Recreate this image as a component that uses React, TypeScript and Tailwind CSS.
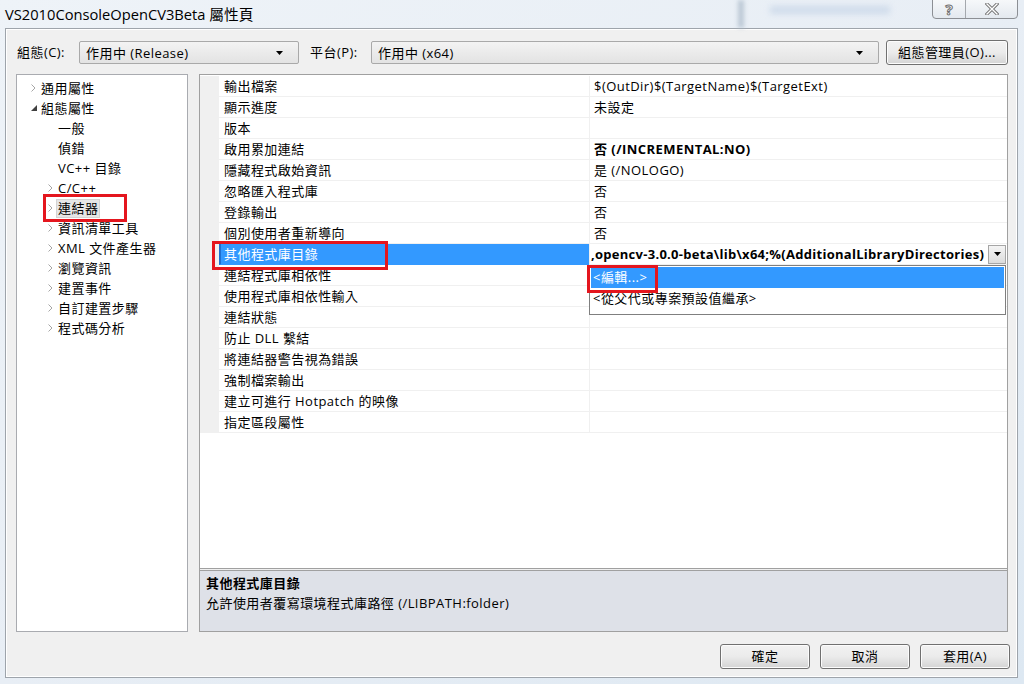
import React from 'react';

const FONT = '"Open Sans", "Noto Sans CJK TC", sans-serif';

interface Prop {
  name: string;
  value: string;
  bold?: boolean;
}

interface TreeItem {
  label: string;
  level: number;
  icon: 'closed' | 'open' | 'none';
  selected?: boolean;
}

const properties: Prop[] = [
  { name: '輸出檔案', value: '$(OutDir)$(TargetName)$(TargetExt)' },
  { name: '顯示進度', value: '未設定' },
  { name: '版本', value: '' },
  { name: '啟用累加連結', value: '否 (/INCREMENTAL:NO)', bold: true },
  { name: '隱藏程式啟始資訊', value: '是 (/NOLOGO)' },
  { name: '忽略匯入程式庫', value: '否' },
  { name: '登錄輸出', value: '否' },
  { name: '個別使用者重新導向', value: '否' },
  { name: '其他程式庫目錄', value: ',opencv-3.0.0-beta\\lib\\x64;%(AdditionalLibraryDirectories)', bold: true },
  { name: '連結程式庫相依性', value: '' },
  { name: '使用程式庫相依性輸入', value: '' },
  { name: '連結狀態', value: '' },
  { name: '防止 DLL 繫結', value: '' },
  { name: '將連結器警告視為錯誤', value: '' },
  { name: '強制檔案輸出', value: '' },
  { name: '建立可進行 Hotpatch 的映像', value: '' },
  { name: '指定區段屬性', value: '' },
];

const tree: TreeItem[] = [
  { label: '通用屬性', level: 0, icon: 'closed' },
  { label: '組態屬性', level: 0, icon: 'open' },
  { label: '一般', level: 1, icon: 'none' },
  { label: '偵錯', level: 1, icon: 'none' },
  { label: 'VC++ 目錄', level: 1, icon: 'none' },
  { label: 'C/C++', level: 1, icon: 'closed' },
  { label: '連結器', level: 1, icon: 'closed', selected: true },
  { label: '資訊清單工具', level: 1, icon: 'closed' },
  { label: 'XML 文件產生器', level: 1, icon: 'closed' },
  { label: '瀏覽資訊', level: 1, icon: 'closed' },
  { label: '建置事件', level: 1, icon: 'closed' },
  { label: '自訂建置步驟', level: 1, icon: 'closed' },
  { label: '程式碼分析', level: 1, icon: 'closed' },
];

const DownArrow: React.FC = () => (
  <svg width="7" height="4" viewBox="0 0 7 4">
    <polygon points="0,0 7,0 3.5,4" fill="#000" />
  </svg>
);

const Combo: React.FC<{ text: string; className: string }> = ({ text, className }) => (
  <div
    className={`h-[23px] flex items-center justify-between rounded-[2px] border border-[#a9a9a9] bg-gradient-to-b from-[#f3f3f3] to-[#e3e3e3] pl-[6px] pr-[15px] ${className}`}
  >
    <span className="text-[13px] leading-[18px] text-black">{text}</span>
    <DownArrow />
  </div>
);

const WinButton: React.FC<{ label: string; className?: string }> = ({ label, className = '' }) => (
  <button
    className={`h-[25px] flex items-center justify-center rounded-[3px] border border-[#707070] bg-gradient-to-b from-[#f2f2f2] via-[#ebebeb] to-[#d4d4d4] text-[13px] text-black shadow-[inset_0_0_0_1px_#fcfcfc] ${className}`}
  >
    {label}
  </button>
);

const Chevron: React.FC<{ icon: TreeItem['icon'] }> = ({ icon }) => {
  if (icon === 'closed')
    return (
      <svg width="5" height="8" viewBox="0 0 5 8">
        <polyline points="0.5,0.5 4,4 0.5,7.5" fill="none" stroke="#a6a6a6" strokeWidth="1" />
      </svg>
    );
  if (icon === 'open')
    return (
      <svg width="6" height="6" viewBox="0 0 6 6">
        <polygon points="6,0 6,6 0,6" fill="#404040" />
      </svg>
    );
  return null;
};

const App: React.FC = () => {
  return (
    <div
      className="w-[1024px] h-[684px] relative overflow-hidden bg-gradient-to-br from-[#eef3f8] via-[#e8eef5] to-[#dde8f2] tracking-[0.45px]"
      style={{ fontFamily: FONT }}
    >
      {/* glass caption */}
      <div className="h-[28px] flex items-center pl-[5px] relative">
        <span className="text-[14.7px] text-black leading-[20px] tracking-normal">VS2010ConsoleOpenCV3Beta 屬性頁</span>
        <div className="absolute left-[738px] top-0 w-[6px] h-[28px] bg-[#a9b8c8] blur-[2px] opacity-70" />
        <div className="absolute left-[770px] top-[6px] w-[120px] h-[8px] bg-[#c4d3e6] blur-[3px] opacity-70" />
        <div className="absolute right-[6px] top-[-1px] flex h-[20px] border border-[#8c8f94] rounded-b-[4px] bg-gradient-to-b from-[#f6f8fa] to-[#e4e9ef]">
          <div className="w-[33px] flex items-center justify-center border-r border-[#a4a8ad]">
            <span className="text-[15px] font-bold text-white leading-[16px] tracking-normal [-webkit-text-stroke:1px_#6f6f6f]">?</span>
          </div>
          <div className="w-[51px] flex items-center justify-center">
            <svg width="14" height="12" viewBox="0 0 14 12">
              <path d="M2 1 L12 11 M12 1 L2 11" stroke="#6f6f6f" strokeWidth="3.2" strokeLinecap="square" />
              <path d="M2 1 L12 11 M12 1 L2 11" stroke="#ffffff" strokeWidth="1.4" strokeLinecap="square" />
            </svg>
          </div>
        </div>
      </div>

      {/* dialog client */}
      <div className="ml-[5px] w-[1013px] h-[650px] border border-[#9ea4ab] bg-[#f0f0f0] flex flex-col shadow-[inset_0_0_0_1px_#ffffff]">
        {/* config row */}
        <div className="mt-[12px] h-[23px] flex items-center">
          <span className="ml-[11px] w-[62px] text-[13px] text-black">組態(C):</span>
          <Combo text="作用中 (Release)" className="w-[220px]" />
          <span className="ml-[11px] w-[61px] text-[13px] text-black">平台(P):</span>
          <Combo text="作用中 (x64)" className="w-[508px]" />
          <WinButton label="組態管理員(O)..." className="ml-[7px] w-[122px] h-[23px]" />
        </div>

        {/* main area */}
        <div className="mt-[10px] h-[558px] flex">
          {/* tree */}
          <div className="ml-[10px] w-[172px] border border-[#a9abb0] bg-white pt-[3px]">
            {tree.map((t, i) => (
              <div
                key={i}
                className={`h-[20px] flex items-center ${t.level === 0 ? 'pl-[12px]' : 'pl-[29px]'}`}
              >
                <div className="w-[10px] pl-[2px] flex items-center">
                  <Chevron icon={t.icon} />
                </div>
                <span
                  className={`text-[13px] text-black leading-[17px] px-[1px] border ${
                    t.selected ? 'bg-[#e6e6e6] border-[#d4d4d4]' : 'border-transparent'
                  }`}
                >
                  {t.label}
                </span>
              </div>
            ))}
          </div>

          {/* property grid + description */}
          <div className="ml-[11px] w-[809px] border border-[#a0a0a0] flex flex-col">
            <div className="flex-1 bg-white pt-[1px] relative">
              {properties.map((p, i) => {
                const selected = i === 8;
                return (
                  <div key={i} className="h-[21px] flex">
                    <div className="w-[19px] shrink-0 bg-[#f0f0f0]" />
                    <div
                      className={`w-[370px] shrink-0 flex items-center border-b ${
                        selected
                          ? 'bg-[#3399ff] text-white border-[#3399ff] border-l-[2px] border-l-[#1e6fd0] pl-[3px]'
                          : 'text-black border-[#f0f0f0] pl-[5px]'
                      }`}
                    >
                      <span className="text-[13px] leading-[18px]">{p.name}</span>
                    </div>
                    <div className="w-px shrink-0 bg-[#f0f0f0]" />
                    {selected ? (
                      <div className="flex-1 min-w-0 flex items-center border-b border-[#f0f0f0] pl-[1px] pr-[1px]">
                        <span className="flex-1 min-w-0 overflow-hidden whitespace-nowrap text-[13px] font-bold text-black leading-[19px] tracking-[0.28px]">
                          {p.value}
                        </span>
                        <div className="w-[18px] h-[19px] shrink-0 flex items-center justify-center border border-[#a6a6a6] bg-gradient-to-b from-[#f4f4f4] to-[#dcdcdc]">
                          <DownArrow />
                        </div>
                      </div>
                    ) : (
                      <div className="flex-1 min-w-0 flex items-center pl-[4px] border-b border-[#f0f0f0]">
                        <span className={`text-[13px] text-black leading-[18px] ${p.bold ? 'font-bold' : ''}`}>
                          {p.value}
                        </span>
                      </div>
                    )}
                  </div>
                );
              })}

              {/* open dropdown list */}
              <div className="absolute left-[389px] top-[190px] w-[417px] h-[50px] border border-[#7f7f7f] bg-white pt-[1px] px-[1px]">
                <div className="h-[21px] flex items-center pl-[2px] bg-[#3399ff] text-white text-[13px]">&lt;編輯...&gt;</div>
                <div className="h-[21px] flex items-center pl-[2px] text-black text-[13px]">&lt;從父代或專案預設值繼承&gt;</div>
              </div>
            </div>
            <div className="h-[3px] bg-[#f0f0f0] border-y border-[#a0a0a0]" />
            <div className="h-[60px] bg-[#dee1e8] pl-[6px] pt-[2px]">
              <div className="text-[13px] font-bold text-black leading-[20px]">其他程式庫目錄</div>
              <div className="text-[13px] text-black leading-[20px]">允許使用者覆寫環境程式庫路徑 (/LIBPATH:folder)</div>
            </div>
          </div>
        </div>

        {/* bottom buttons */}
        <div className="mt-[12px] flex justify-end gap-[10px] pr-[7px]">
          <WinButton label="確定" className="w-[90px]" />
          <WinButton label="取消" className="w-[90px]" />
          <WinButton label="套用(A)" className="w-[90px]" />
        </div>
      </div>

      {/* red annotation boxes */}
      <div className="absolute left-[43px] top-[194px] w-[84px] h-[28px] border-[3px] border-[#e4161e]" />
      <div className="absolute left-[212px] top-[241px] w-[176px] h-[29px] border-[3px] border-[#e4161e]" />
      <div className="absolute left-[587px] top-[265px] w-[71px] h-[28px] border-[3px] border-[#e4161e]" />
    </div>
  );
};

export default App;
